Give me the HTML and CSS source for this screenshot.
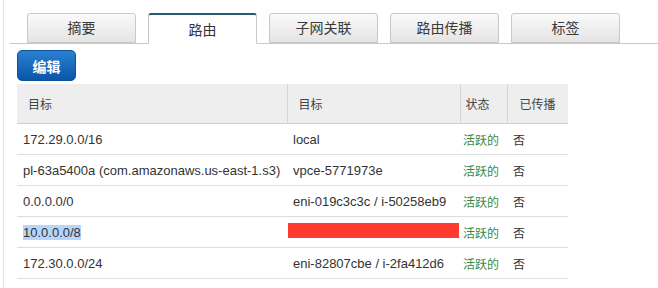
FILE: index.html
```html
<!DOCTYPE html>
<html lang="zh-CN">
<head>
    <meta charset="UTF-8">
    <title>路由表</title>
    <link rel="stylesheet" href="styles.css">
</head>
<body>
    <div class="panel">
        <ul class="tabs">
            <li class="tab">摘要</li>
            <li class="tab active">路由</li>
            <li class="tab">子网关联</li>
            <li class="tab">路由传播</li>
            <li class="tab">标签</li>
        </ul>

        <div class="content">
            <button class="btn-edit">编辑</button>

            <table class="routes">
                <colgroup>
                    <col class="c-dest">
                    <col class="c-target">
                    <col class="c-status">
                    <col class="c-prop">
                </colgroup>
                <thead>
                    <tr>
                        <th class="h-dest">目标</th>
                        <th class="h-target">目标</th>
                        <th class="h-status">状态</th>
                        <th class="h-prop">已传播</th>
                    </tr>
                </thead>
                <tbody>
                    <tr>
                        <td>172.29.0.0/16</td>
                        <td>local</td>
                        <td class="status">活跃的</td>
                        <td>否</td>
                    </tr>
                    <tr>
                        <td>pl-63a5400a (com.amazonaws.us-east-1.s3)</td>
                        <td>vpce-5771973e</td>
                        <td class="status">活跃的</td>
                        <td>否</td>
                    </tr>
                    <tr>
                        <td>0.0.0.0/0</td>
                        <td>eni-019c3c3c / i-50258eb9</td>
                        <td class="status">活跃的</td>
                        <td>否</td>
                    </tr>
                    <tr>
                        <td><span class="selected">10.0.0.0/8</span></td>
                        <td><span class="redacted"></span></td>
                        <td class="status">活跃的</td>
                        <td>否</td>
                    </tr>
                    <tr>
                        <td>172.30.0.0/24</td>
                        <td>eni-82807cbe / i-2fa412d6</td>
                        <td class="status">活跃的</td>
                        <td>否</td>
                    </tr>
                </tbody>
            </table>
        </div>
    </div>
</body>
</html>
```

FILE: styles.css
```css
body {
    margin: 0;
    background: #fff;
    font-family: "Liberation Sans", "Noto Sans CJK SC", sans-serif;
    color: #333;
}
.panel {
    margin-left: 3px;
    min-height: 288px;
    border-left: 1px solid #e3e3e3;
    padding-left: 6px;
}
.tabs {
    display: flex;
    gap: 12px;
    list-style: none;
    margin: 0;
    padding: 13px 0 0 17px;
    border-bottom: 1px solid #c8c8c8;
}
.tab {
    width: 107px;
    height: 28px;
    margin-bottom: -1px;
    border: 1px solid #c8c8c8;
    border-radius: 3px 3px 0 0;
    background: linear-gradient(#fafafa, #e4e4e4);
    font-size: 14px;
    line-height: 28px;
    text-align: center;
    color: #3a3a3a;
}
.tab.active {
    height: 28px;
    border-top: 2px solid #265a70;
    border-bottom-color: #fff;
    background: #fff;
    line-height: 30px;
    color: #333;
}
.content {
    padding: 6px 0 0 7px;
}
.btn-edit {
    display: block;
    width: 59px;
    height: 31px;
    padding: 0;
    border: 1px solid #0c4f9c;
    border-radius: 5px;
    background: linear-gradient(#2a80d2, #0a56a9);
    color: #fff;
    font-family: "Noto Sans CJK SC", sans-serif;
    font-size: 14px;
    font-weight: bold;
}
.routes {
    margin-top: 3px;
    width: 551px;
    table-layout: fixed;
    border-collapse: collapse;
    font-size: 13px;
}
.c-dest { width: 270px; }
.c-target { width: 173px; }
.c-status { width: 47px; }
.c-prop { width: 61px; }
.routes th {
    height: 39px;
    padding: 0;
    background: #eee;
    border-bottom: 1px solid #cfcfcf;
    border-left: 1px solid #d6d6d6;
    font-weight: normal;
    font-size: 12px;
    color: #444;
    text-align: left;
}
.routes th:first-child {
    border-left: none;
}
.h-dest, .h-target { padding-left: 11px !important; }
.h-status { padding-left: 5px !important; }
.h-prop { padding-left: 12px !important; }
.routes td {
    height: 30px;
    padding: 0 0 0 6px;
    border-bottom: 1px solid #ddd;
    white-space: nowrap;
}
.routes td.status {
    padding-left: 3px;
    color: #3a8a45;
    font-size: 12px;
}
.routes td:last-child {
    font-size: 12px;
}
.selected {
    background: #b5d5fb;
}
.redacted {
    display: block;
    width: 171px;
    height: 15px;
    margin: -4px 0 0 -5px;
    background: #ff3a2f;
}
```
